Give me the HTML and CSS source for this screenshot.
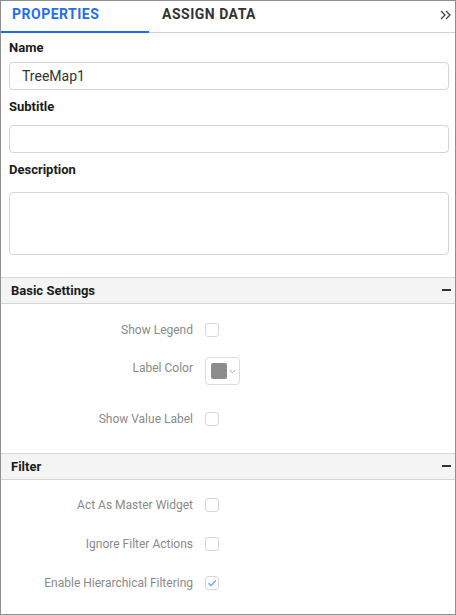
FILE: index.html
```html
<!DOCTYPE html>
<html>
<head>
<meta charset="utf-8">
<link rel="stylesheet" href="styles.css">
</head>
<body>
<div class="panel">
  <div class="tabs">
    <div class="tab active">PROPERTIES</div>
    <div class="tab tab-second">ASSIGN DATA</div>
    <div class="collapse">
      <svg width="11" height="10" viewBox="0 0 11 10"><path d="M1 1 L5 5 L1 9 M6 1 L10 5 L6 9" fill="none" stroke="#444" stroke-width="1.3"/></svg>
    </div>
  </div>

  <div class="general">
    <div class="field-label first">Name</div>
    <div class="input">TreeMap1</div>
    <div class="field-label">Subtitle</div>
    <div class="input input-sub"></div>
    <div class="field-label">Description</div>
    <div class="textarea"></div>
  </div>

  <div class="section-header">
    <span>Basic Settings</span>
    <span class="minus"></span>
  </div>
  <div class="section-body basic">
    <div class="row">
      <div class="row-label">Show Legend</div>
      <div class="checkbox"></div>
    </div>
    <div class="row row-tall">
      <div class="row-label">Label Color</div>
      <div class="picker">
        <span class="swatch"></span>
        <svg width="7" height="5" viewBox="0 0 7 5"><path d="M0.5 0.8 L3.5 3.8 L6.5 0.8" fill="none" stroke="#aaa" stroke-width="1"/></svg>
      </div>
    </div>
    <div class="row">
      <div class="row-label">Show Value Label</div>
      <div class="checkbox"></div>
    </div>
  </div>

  <div class="section-header">
    <span>Filter</span>
    <span class="minus"></span>
  </div>
  <div class="section-body filter">
    <div class="row">
      <div class="row-label">Act As Master Widget</div>
      <div class="checkbox"></div>
    </div>
    <div class="row">
      <div class="row-label">Ignore Filter Actions</div>
      <div class="checkbox"></div>
    </div>
    <div class="row">
      <div class="row-label">Enable Hierarchical Filtering</div>
      <div class="checkbox checked">
        <svg width="12" height="12" viewBox="0 0 12 12"><path d="M2.5 6.2 L5 8.6 L9.8 3.4" fill="none" stroke="#6e9ff7" stroke-width="1.4"/></svg>
      </div>
    </div>
  </div>
</div>
</body>
</html>
```

FILE: styles.css
```css
html, body {
  margin: 0;
  padding: 0;
  background: #ffffff;
}

body {
  font-family: Roboto, "Liberation Sans", sans-serif;
}

.panel {
  width: 456px;
  height: 615px;
  box-sizing: border-box;
  border: 1px solid #8f8f8f;
  background: #ffffff;
  overflow: hidden;
}

/* Tabs */
.tabs {
  display: flex;
  height: 32px;
  box-shadow: inset 0 -1px 0 #d0d0d0;
}

.tab {
  width: 148px;
  box-sizing: border-box;
  padding: 5px 0 0 11px;
  font-size: 14px;
  font-weight: 700;
  line-height: 16px;
  letter-spacing: 0.5px;
  color: #333333;
}

.tab.active {
  color: #1f6ff0;
  box-shadow: inset 0 -2px 0 #1a6cf2;
}

.tab-second {
  padding-left: 13px;
}

.collapse {
  margin-left: auto;
  margin-right: 4px;
  padding-top: 9px;
}

.collapse svg {
  display: block;
}

/* General fields */
.general {
  padding: 0 6px 0 8px;
}

.field-label {
  font-size: 13px;
  font-weight: 700;
  line-height: 16px;
  color: #1b1b1b;
  margin-top: 9px;
}

.field-label.first {
  margin-top: 7px;
}

.input {
  margin-top: 6px;
  height: 28px;
  box-sizing: border-box;
  border: 1px solid #d4d4d4;
  border-radius: 4px;
  padding: 0 12px;
  font-size: 14px;
  line-height: 26px;
  color: #333333;
}

.input-sub {
  margin-top: 10px;
}

.textarea {
  margin-top: 14px;
  height: 63px;
  box-sizing: border-box;
  border: 1px solid #d4d4d4;
  border-radius: 4px;
  margin-bottom: 22px;
}

/* Section headers */
.section-header {
  display: flex;
  align-items: center;
  justify-content: space-between;
  height: 25px;
  border-top: 1px solid #d4d4d4;
  border-bottom: 1px solid #d4d4d4;
  background: #f4f4f4;
  padding: 0 4px 0 10px;
  font-size: 13px;
  font-weight: 700;
  line-height: 25px;
  color: #1b1b1b;
}

.minus {
  width: 9px;
  height: 2px;
  background: #333333;
  margin-top: -1px;
}

/* Section bodies */
.section-body {
  padding-top: 6px;
}

.section-body.basic {
  padding-bottom: 15px;
}

.section-body.filter {
  padding-top: 5px;
}

.row {
  display: flex;
  align-items: center;
  height: 39px;
}

.row-tall {
  height: 50px;
  align-items: flex-start;
  padding-top: 8px;
  box-sizing: border-box;
}

.row-label {
  width: 192px;
  flex: none;
  text-align: right;
  font-size: 12px;
  line-height: 16px;
  color: #8a8a8a;
  margin-right: 12px;
}

.row-tall .row-label {
  line-height: 22px;
}

.checkbox {
  width: 14px;
  height: 14px;
  box-sizing: border-box;
  border: 1px solid #d6d6d6;
  border-radius: 3px;
  display: flex;
  align-items: center;
  justify-content: center;
}

.checkbox svg {
  display: block;
}

.picker {
  width: 35px;
  height: 28px;
  box-sizing: border-box;
  border: 1px solid #dcdcdc;
  border-radius: 4px;
  display: flex;
  align-items: center;
  padding-left: 5px;
  gap: 2px;
}

.swatch {
  width: 16px;
  height: 16px;
  background: #8c8c8c;
  border-radius: 2px;
}

.picker svg {
  display: block;
  margin-top: 1px;
}
```
